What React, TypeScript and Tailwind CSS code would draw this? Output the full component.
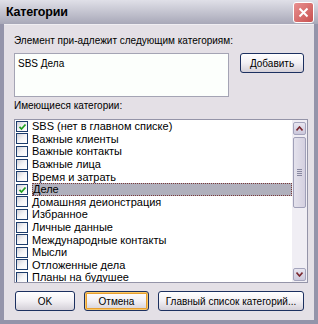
import React from "react";

const items: { label: string; checked: boolean; selected?: boolean }[] = [
  { label: "SBS (нет в главном списке)", checked: true },
  { label: "Важные клиенты", checked: false },
  { label: "Важные контакты", checked: false },
  { label: "Важные лица", checked: false },
  { label: "Время и затрать", checked: false },
  { label: "Деле", checked: true, selected: true },
  { label: "Домашняя деионстрация", checked: false },
  { label: "Избранное", checked: false },
  { label: "Личные данные", checked: false },
  { label: "Международные контакты", checked: false },
  { label: "Мысли", checked: false },
  { label: "Отложенные дела", checked: false },
  { label: "Планы на будушее", checked: false },
];

function Check({ on }: { on: boolean }) {
  return (
    <div className="relative w-[12px] h-[11px] border border-[#1c3c6c] bg-gradient-to-br from-[#d0d0d8] via-[#f4f4f6] to-white shrink-0">
      {on && (
        <svg className="absolute left-[1px] top-[1px]" width="9" height="8" viewBox="0 0 9 8">
          <path d="M1.5 3.8 L3.5 6 L7.5 1.5" stroke="#22a022" strokeWidth="1.8" fill="none" />
        </svg>
      )}
    </div>
  );
}

function Btn({ children, w, focus }: { children: React.ReactNode; w: string; focus?: boolean }) {
  return (
    <div
      className={`${w} h-[20px] rounded-[3px] border border-[#1c3060] bg-gradient-to-b from-white via-[#f2f0f4] to-[#d4d0d8] flex items-center justify-center text-black text-[10px] whitespace-nowrap ${
        focus ? "shadow-[inset_0_0_0_1px_#f8c868,inset_0_0_0_2px_#e8a030]" : ""
      }`}
    >
      {children}
    </div>
  );
}

function Arrow({ up }: { up: boolean }) {
  return (
    <div className="w-[13px] h-[13px] border border-[#a4a4bc] rounded-[2px] bg-gradient-to-b from-[#e8e6f0] to-[#ccc8dc] flex items-center justify-center">
      <svg width="7" height="5" viewBox="0 0 7 5">
        {up ? (
          <path d="M0.5 4.5 L3.5 1 L6.5 4.5" stroke="#7a2830" strokeWidth="1.6" fill="none" />
        ) : (
          <path d="M0.5 0.5 L3.5 4 L6.5 0.5" stroke="#7a2830" strokeWidth="1.6" fill="none" />
        )}
      </svg>
    </div>
  );
}

export default function App() {
  return (
    <div
      className="w-[318px] h-[324px] flex flex-col bg-[#9494aa] text-[11px] text-black overflow-hidden"
      style={{ fontFamily: '"Liberation Sans", Arial, sans-serif' }}
    >
      <div className="h-[24px] shrink-0 bg-gradient-to-b from-[#e0e0e8] via-[#c4c4d0] to-[#a8a8b8] flex items-center justify-between pl-[6px] pr-[4px]">
        <span className="font-bold text-[12.5px] tracking-[-0.2px] text-black">Категории</span>
        <div className="w-[21px] h-[21px] rounded-[3px] border border-white bg-gradient-to-br from-[#e89090] to-[#c85050] flex items-center justify-center">
          <svg width="11" height="11" viewBox="0 0 11 11">
            <path d="M1.5 1.5 L9.5 9.5 M9.5 1.5 L1.5 9.5" stroke="white" strokeWidth="2" />
          </svg>
        </div>
      </div>
      <div className="flex-1 flex flex-col mx-[4px] mb-[4px] bg-[#e4e0e6] border-t border-[#f0eef2] px-[10px] pt-[9px]">
        <div className="h-[13px] leading-[13px] whitespace-nowrap text-[10px]">Элемент при-адлежит следующим категориям:</div>
        <div className="flex mt-[6px] h-[44px]">
          <div className="w-[218px] h-[44px] border border-[#a4a4b4] bg-[#fcfffc] px-[3px] pt-[3px] leading-[13px] text-[10px]">SBS Дела</div>
          <div className="ml-[11px]">
            <Btn w="w-[64px]">Добавить</Btn>
          </div>
        </div>
        <div className="h-[13px] leading-[13px] mt-[2px] whitespace-nowrap text-[10px]">Имеющиеся категории:</div>
        <div className="mt-[7px] w-[294px] h-[164px] border border-[#9494a8] bg-white flex">
          <div className="flex-1 flex flex-col pl-[1px] overflow-hidden">
            {items.map((it) => (
              <div key={it.label} className="h-[12.6px] shrink-0 flex items-center">
                <Check on={it.checked} />
                <div
                  className={`ml-[4px] h-[12.6px] flex-1 flex items-center whitespace-nowrap leading-[12px] ${
                    it.selected ? "bg-[#b0b0bc] border border-dotted border-[#7a3a3a]" : ""
                  }`}
                >
                  {it.label}
                </div>
              </div>
            ))}
          </div>
          <div className="w-[15px] flex flex-col items-center pt-[2px] pb-[1px] bg-[#f0eef4]">
            <Arrow up />
            <div className="flex-1 w-[13px] relative">
              <div className="absolute left-0 top-[2px] w-[13px] h-[71px] border border-[#a0a0b8] rounded-[2px] bg-gradient-to-r from-[#e4e2ec] to-[#d4d0e0] flex flex-col items-center justify-center gap-[1px]">
                <div className="w-[5px] h-[1px] bg-[#8888a0]" />
                <div className="w-[5px] h-[1px] bg-[#8888a0]" />
                <div className="w-[5px] h-[1px] bg-[#8888a0]" />
                <div className="w-[5px] h-[1px] bg-[#8888a0]" />
              </div>
            </div>
            <Arrow up={false} />
          </div>
        </div>
        <div className="flex mt-[8px] pl-[1px]">
          <Btn w="w-[64px]">OK</Btn>
          <div className="ml-[9px]">
            <Btn w="w-[65px]" focus>
              Отмена
            </Btn>
          </div>
          <div className="ml-[9px]">
            <Btn w="w-[146px]">Главный список категорий...</Btn>
          </div>
        </div>
      </div>
    </div>
  );
}
